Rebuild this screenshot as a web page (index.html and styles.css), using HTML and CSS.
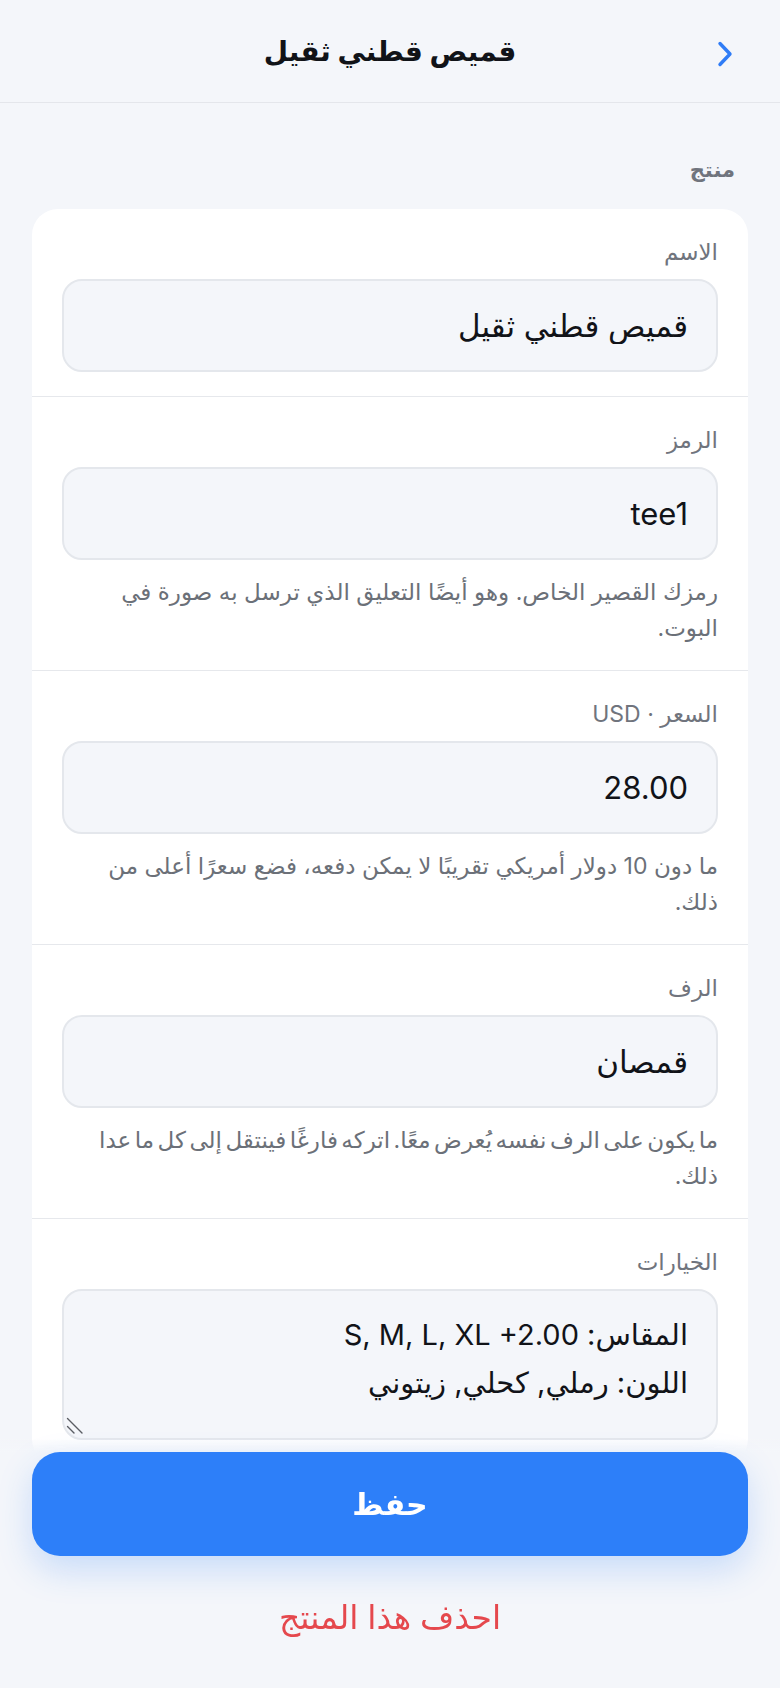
FILE: index.html
```html
<!DOCTYPE html>
<html lang="ar" dir="rtl">
  <head>
    <meta charset="UTF-8" />
    <meta name="viewport" content="width=device-width, initial-scale=1.0" />
    <title>قميص قطني ثقيل</title>
    <link rel="stylesheet" href="styles.css">
  </head>
  <body>
    <div class="header">
      <button type="button" class="back" aria-label="رجوع">
        <svg width="18" height="26" viewBox="0 0 18 26">
          <path d="M4 2.5 L14 13 L4 23.5" fill="none" stroke="#2f7cf6" stroke-width="3.4" stroke-linecap="round" stroke-linejoin="round" />
        </svg>
      </button>
      <h1>قميص قطني ثقيل</h1>
      <span></span>
    </div>

    <div class="container">
      <div class="section-title">منتج</div>
      <div class="card">
        <div class="field">
          <label for="name">الاسم</label>
          <input type="text" id="name" value="قميص قطني ثقيل" />
        </div>
        <div class="field">
          <label for="code">الرمز</label>
          <input type="text" id="code" value="tee1" />
          <p class="hint">رمزك القصير الخاص. وهو أيضًا التعليق الذي ترسل به صورة في البوت.</p>
        </div>
        <div class="field">
          <label for="price">السعر · USD</label>
          <input type="text" id="price" value="28.00" />
          <p class="hint">ما دون 10 دولار أمريكي تقريبًا لا يمكن دفعه، فضع سعرًا أعلى من ذلك.</p>
        </div>
        <div class="field">
          <label for="shelf">الرف</label>
          <input type="text" id="shelf" value="قمصان" />
          <p class="hint tight">ما يكون على الرف نفسه يُعرض معًا. اتركه فارغًا فينتقل إلى كل ما عدا ذلك.</p>
        </div>
        <div class="field">
          <label for="options">الخيارات</label>
          <div class="textarea-wrap">
            <textarea id="options" rows="2">المقاس: S, M, L, XL +2.00
اللون: رملي, كحلي, زيتوني</textarea>
            <svg class="grip" width="18" height="18" viewBox="0 0 18 18">
              <path d="M1.5 1.5 L16 16 M1.5 9.5 L8 16" stroke="#5a5d63" stroke-width="1.4" stroke-linecap="round" />
            </svg>
          </div>
        </div>
      </div>
    </div>

    <div class="footer">
      <button type="button" class="save">حفظ</button>
      <button type="button" class="delete">احذف هذا المنتج</button>
    </div>
  </body>
</html>
```

FILE: styles.css
```css
body {
  font-family: Inter, "DejaVu Sans", sans-serif;
  background-color: #f4f6fa;
  color: #111318;
  margin: 0;
  padding: 0;
  height: 1688px;
  overflow: hidden;
}
.header {
  display: grid;
  grid-template-columns: 1fr auto 1fr;
  align-items: center;
  height: 102px;
  padding: 0 46px;
  border-bottom: 1px solid #e4e6eb;
}
.header h1 {
  margin: 0;
  font-size: 28px;
  font-weight: 700;
  line-height: 40px;
}
.back {
  justify-self: start;
  background: none;
  border: none;
  padding: 0;
  margin-top: 8px;
  cursor: pointer;
}
.container {
  padding: 0 32px;
}
.section-title {
  padding: 52px 13px 0;
  font-size: 21px;
  font-weight: 600;
  line-height: 30px;
  color: #70747d;
}
.card {
  margin-top: 24px;
  background-color: #ffffff;
  border-radius: 26px;
}
.field {
  padding: 26px 30px 24px;
  border-bottom: 1px solid #e6e8ec;
}
.field label {
  display: block;
  font-size: 23px;
  line-height: 34px;
  color: #70747d;
  margin-bottom: 10px;
}
input,
textarea {
  display: block;
  box-sizing: border-box;
  width: 100%;
  font-family: Inter, "DejaVu Sans", sans-serif;
  font-size: 31px;
  color: #111318;
  background-color: #f4f6fa;
  border: 2px solid #e4e7ec;
  border-radius: 20px;
  outline: none;
}
input {
  height: 93px;
  padding: 0 28px;
}
.textarea-wrap {
  position: relative;
}
textarea {
  height: 151px;
  padding: 20px 28px 0;
  font-size: 29px;
  line-height: 48px;
  resize: none;
}
.grip {
  position: absolute;
  left: 4px;
  bottom: 5px;
}
.hint {
  margin: 14px 0 0;
  font-size: 23px;
  line-height: 36px;
  color: #6b7078;
}
.hint.tight {
  word-spacing: -3px;
}
.footer {
  position: fixed;
  left: 0;
  right: 0;
  bottom: 0;
  display: flex;
  flex-direction: column;
  align-items: center;
  padding: 14px 32px 51px;
  background: linear-gradient(to bottom, rgba(244, 246, 250, 0), #f4f6fa 14px);
}
.save {
  width: 100%;
  height: 104px;
  border: none;
  border-radius: 28px;
  background-color: #2d7ff9;
  color: #ffffff;
  font-family: Inter, "DejaVu Sans", sans-serif;
  font-size: 30px;
  font-weight: 700;
  box-shadow: 0 14px 34px rgba(45, 127, 249, 0.22);
  cursor: pointer;
}
.delete {
  margin-top: 41px;
  background: none;
  border: none;
  padding: 0;
  font-family: Inter, "DejaVu Sans", sans-serif;
  font-size: 33px;
  font-weight: 500;
  line-height: 40px;
  color: #e5484d;
  cursor: pointer;
}
```
